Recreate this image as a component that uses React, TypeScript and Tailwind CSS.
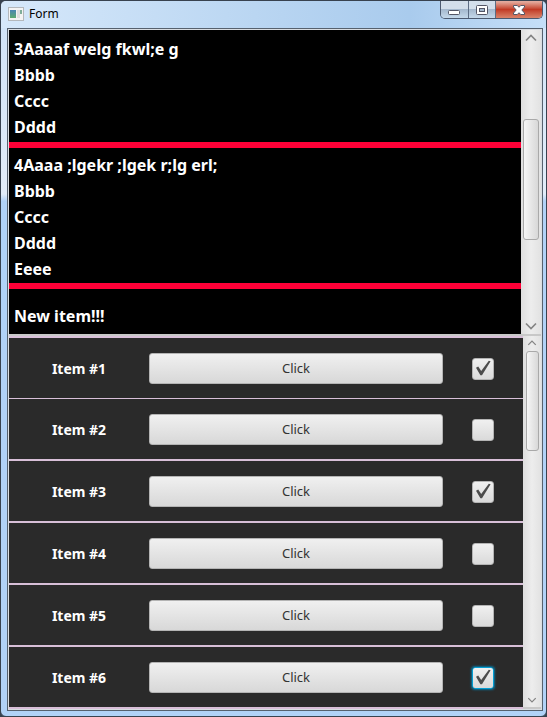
import React, { useState } from 'react';

interface Message {
  lines: string[];
  className: string;
}

interface Item {
  id: number;
  checked: boolean;
  focused?: boolean;
}

const messages: Message[] = [
  { lines: ['3Aaaaf welg fkwl;e g', 'Bbbb', 'Cccc', 'Dddd'], className: 'pt-1.5 pb-0.5' },
  { lines: ['4Aaaa ;lgekr ;lgek r;lg erl;', 'Bbbb', 'Cccc', 'Dddd', 'Eeee'], className: 'pt-1 pb-px' },
];

const items: Item[] = [
  { id: 1, checked: true },
  { id: 2, checked: false },
  { id: 3, checked: true },
  { id: 4, checked: false },
  { id: 5, checked: false },
  { id: 6, checked: true, focused: true },
];

const Chevron: React.FC<{ down?: boolean; small?: boolean }> = ({ down, small }) => (
  <svg
    viewBox="0 0 12 8"
    className={small ? 'w-2.5 h-1.5' : 'w-3 h-2'}
    fill="none"
    stroke="#848484"
    strokeWidth="1.7"
  >
    <path d={down ? 'M1 1.5 L6 6.5 L11 1.5' : 'M1 6.5 L6 1.5 L11 6.5'} />
  </svg>
);

const TitleBar: React.FC = () => (
  <header className="flex h-[27px] items-start justify-between bg-linear-to-r from-[#d6e8fa] via-[#a9cbed] via-75% to-[#c5dff8] pr-[3px] pl-[7px]">
    <div className="flex items-center gap-[5px] pt-[3px]">
      <svg viewBox="0 0 16 14" className="h-3.5 w-4">
        <defs>
          <linearGradient id="pane" x1="0" y1="0" x2="0" y2="1">
            <stop offset="0" stopColor="#4b86b4" />
            <stop offset="1" stopColor="#5cab70" />
          </linearGradient>
        </defs>
        <rect x="0.5" y="0.5" width="15" height="13" fill="#f4f4f4" stroke="#b4b8bc" />
        <rect x="2" y="3" width="6" height="8" fill="url(#pane)" />
        <rect x="9" y="3" width="3" height="8" fill="#dedede" />
        <rect x="12" y="3" width="2" height="4" fill="#7fae9a" />
      </svg>
      <h1 className="text-xs leading-5 text-black">Form</h1>
    </div>
    <div className="flex h-[18px] overflow-hidden rounded-b-[5px] border border-t-0 border-[#4c5a70]">
      <button
        type="button"
        aria-label="Minimize"
        className="flex w-7 items-center justify-center border-r border-[#5d6d84] bg-linear-to-b from-[#d3dfeb] from-45% via-[#a5b9ce] via-50% to-[#c4d8ea]"
      >
        <svg viewBox="0 0 13 12" className="h-3 w-[13px]">
          <rect x="0.5" y="6.5" width="11" height="4" rx="1" fill="#fff" stroke="#535666" />
        </svg>
      </button>
      <button
        type="button"
        aria-label="Maximize"
        className="flex w-[27px] items-center justify-center border-r border-[#5d6d84] bg-linear-to-b from-[#d3dfeb] from-45% via-[#a5b9ce] via-50% to-[#c4d8ea]"
      >
        <svg viewBox="0 0 12 10" className="h-2.5 w-3">
          <rect x="0.5" y="0.5" width="11" height="9" rx="1" fill="#fff" stroke="#535666" />
          <rect x="3.5" y="3.5" width="5" height="3" fill="#a5b9ce" stroke="#535666" />
        </svg>
      </button>
      <button
        type="button"
        aria-label="Close"
        className="flex w-[46px] items-center justify-center bg-linear-to-b from-[#e3a99c] from-5% via-[#c13a25] via-50% to-[#d9836a]"
      >
        <svg viewBox="0 0 12 10" className="h-2.5 w-3">
          <path
            d="M0.5 0.5H4.3L6 2.3L7.7 0.5H11.5V2L8.8 5L11.5 8V9.5H7.7L6 7.7L4.3 9.5H0.5V8L3.2 5L0.5 2Z"
            fill="#fff"
            stroke="#535666"
          />
        </svg>
      </button>
    </div>
  </header>
);

const MessageList: React.FC = () => (
  <section className="flex border-b-2 border-[#c8c8c8]">
    <div className="min-w-0 flex-1 bg-black text-base leading-[26px] font-bold text-white">
      {messages.map((message) => (
        <div key={message.lines[0]} className="border-b-6 border-[#ff0037]">
          <div className={`pl-[5px] ${message.className}`}>
            {message.lines.map((line) => (
              <p key={line}>{line}</p>
            ))}
          </div>
        </div>
      ))}
      <p className="pt-3.5 pb-[5px] pl-[5px]">New item!!!</p>
    </div>
    {/* Scrollbar */}
    <div className="flex w-5 flex-col items-center bg-linear-to-r from-[#dedede] via-[#ededed] to-[#e2e2e2] pt-1 pb-1">
      <Chevron />
      <div className="h-[77px]" />
      <div className="h-[121px] w-4 rounded-[3px] border border-[#a9a9a9] bg-linear-to-r from-[#f6f6f6] to-[#d8d8d8]" />
      <div className="flex-1" />
      <Chevron down />
    </div>
  </section>
);

const ItemRow: React.FC<{ item: Item }> = ({ item }) => {
  const [checked, setChecked] = useState(item.checked);
  const boxId = `item-${item.id}`;

  return (
    <li className="flex h-[62px] items-center border-b-2 border-[#d8bfd8] pt-px first:h-[61px] first:border-b">
      <label htmlFor={boxId} className="w-[140px] text-center text-sm font-bold text-white">
        Item #{item.id}
      </label>
      <button
        type="button"
        className="h-[31px] flex-1 rounded-[3px] border border-[#b4b4b4] bg-linear-to-b from-[#f0f0f0] to-[#d8d8d8] text-[13px] text-[#333]"
      >
        Click
      </button>
      <div className="flex w-20 justify-center">
        <span className="relative flex size-[22px]">
          <input
            id={boxId}
            type="checkbox"
            checked={checked}
            onChange={(e) => setChecked(e.target.checked)}
            className={`size-full appearance-none rounded-[3px] border bg-linear-to-b from-[#f0f0f0] to-[#dadada] ${
              item.focused ? 'border-[#039ed3] shadow-[0_0_2px_1px_#0b6f95]' : 'border-[#b4b4b4]'
            }`}
          />
          {checked && (
            <svg viewBox="0 0 22 22" className="pointer-events-none absolute inset-0">
              <path d="M4 9.8L6.2 8.6L9.2 13L16.8 2.8L18.6 3.2L10 17.2H8.4Z" fill="#4c4c4c" />
            </svg>
          )}
        </span>
      </div>
    </li>
  );
};

const ItemList: React.FC = () => (
  <section className="flex">
    <ul className="min-w-0 flex-1 border-t-2 border-[#d8bfd8] bg-[#2a2a2a]">
      {items.map((item) => (
        <ItemRow key={item.id} item={item} />
      ))}
    </ul>
    {/* Scrollbar */}
    <div className="flex w-[18px] flex-col items-center border-b-2 border-[#c8c8c8] bg-linear-to-r from-[#dedede] via-[#ededed] to-[#e2e2e2] pt-1 pb-1">
      <Chevron small />
      <div className="h-[5px]" />
      <div className="h-[100px] w-[13px] rounded-[3px] border border-[#a9a9a9] bg-linear-to-r from-[#f6f6f6] to-[#d8d8d8]" />
      <div className="flex-1" />
      <Chevron down small />
    </div>
  </section>
);

export default function App() {
  return (
    <div className="bg-[#38424f]">
      <div className="min-h-screen overflow-hidden rounded-md border border-[#38424f] bg-linear-to-b from-[#cfe3f8] via-[#e2ecf8] via-27% to-[#b1d2f7] to-28% font-['Noto_Sans',sans-serif]">
        <TitleBar />
        <main className="mr-[3px] ml-1.5 border border-[#56616e] bg-[#d9dde2] p-px">
          <MessageList />
          <ItemList />
        </main>
      </div>
    </div>
  );
}
